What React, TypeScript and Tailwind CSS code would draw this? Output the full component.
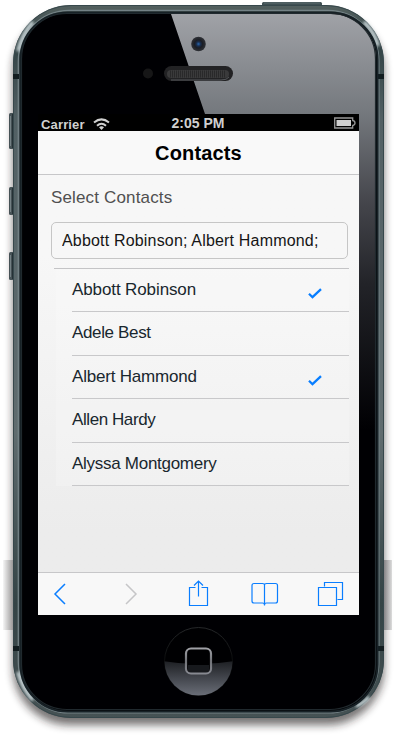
const contacts = [
  { name: "Abbott Robinson", selected: true, tracking: "tracking-[-0.11px]" },
  { name: "Adele Best", selected: false, tracking: "tracking-[-0.35px]" },
  { name: "Albert Hammond", selected: true, tracking: "tracking-[-0.2px]" },
  { name: "Allen Hardy", selected: false, tracking: "tracking-[-0.42px]" },
  { name: "Alyssa Montgomery", selected: false, tracking: "tracking-[-0.28px]" },
];

function Phone() {
  return (
    <svg className="absolute inset-0" width="401" height="748" viewBox="0 0 401 748" fill="none" aria-hidden="true">
      <defs>
        <linearGradient id="metal" x1="0" y1="5" x2="0" y2="718" gradientUnits="userSpaceOnUse">
          <stop stopColor="#53605f" />
          <stop offset=".06" stopColor="#344446" />
          <stop offset=".16" stopColor="#526064" />
          <stop offset=".6" stopColor="#606c6f" />
          <stop offset=".84" stopColor="#344345" />
          <stop offset="1" stopColor="#465254" />
        </linearGradient>
        <linearGradient id="glass" x1="0" y1="14" x2="0" y2="430" gradientUnits="userSpaceOnUse">
          <stop stopColor="#a0a2a7" />
          <stop offset=".24" stopColor="#74787d" />
          <stop offset=".45" stopColor="#45464c" />
          <stop offset=".65" stopColor="#222328" />
          <stop offset="1" stopColor="#000003" />
        </linearGradient>
        <linearGradient id="home" x1="0" y1="660" x2="0" y2="696" gradientUnits="userSpaceOnUse">
          <stop stopColor="#1b1d21" />
          <stop offset="1" stopColor="#6b6f79" />
        </linearGradient>
        <linearGradient id="square" x1="0" y1="647" x2="0" y2="675" gradientUnits="userSpaceOnUse">
          <stop stopColor="#a5a6ab" />
          <stop offset=".5" stopColor="#727479" />
          <stop offset="1" stopColor="#8a8c94" />
        </linearGradient>
        <linearGradient id="ring" x1="0" y1="627" x2="0" y2="665" gradientUnits="userSpaceOnUse">
          <stop stopColor="#26282a" />
          <stop offset="1" stopColor="#08090a" />
        </linearGradient>
        <linearGradient id="leftShade" x1="3" y1="0" x2="13" y2="0" gradientUnits="userSpaceOnUse">
          <stop stopColor="#f6f6f6" />
          <stop offset="1" stopColor="#9a9898" />
        </linearGradient>
        <linearGradient id="rightShade" x1="384" y1="0" x2="392" y2="0" gradientUnits="userSpaceOnUse">
          <stop stopColor="#858385" />
          <stop offset="1" stopColor="#dddddd" />
        </linearGradient>
        <radialGradient id="lens">
          <stop stopColor="#2866ad" />
          <stop offset=".3" stopColor="#192c4b" />
          <stop offset=".55" stopColor="#1b1e25" />
          <stop offset="1" stopColor="#303237" />
        </radialGradient>
        <clipPath id="face"><rect x="22" y="14" width="354" height="696" rx="45" /></clipPath>
        <clipPath id="homeClip"><circle cx="198.5" cy="661.5" r="34" /></clipPath>
        <filter id="shadow" x="-15%" y="-10%" width="130%" height="120%"><feGaussianBlur stdDeviation="4.2" /></filter>
        <filter id="shine" x="-80%" y="-80%" width="260%" height="260%"><feGaussianBlur stdDeviation="1.5" /></filter>
      </defs>
      <rect x="13" y="14" width="371" height="711" rx="57" fill="#201b1c" opacity=".62" filter="url(#shadow)" />
      <path d="M3 560h10v70H3Z" fill="url(#leftShade)" />
      <path d="M384 560h8v70h-8Z" fill="url(#rightShade)" />
      <rect x="262" y="2" width="60" height="8" rx="1.5" fill="#405053" />
      <path d="M264 3h56" stroke="#5d6c70" />
      {[[113, 36], [187, 28], [252, 28]].map(([y, h]) => (
        <g key={y}>
          <rect x="9" y={y} width="7" height={h} rx="1.5" fill="#465256" />
          <path d={`M10.5 ${y + 3}v${h - 6}`} stroke="#748084" />
          <path d={`M12.5 ${y + 1}v${h - 2}`} stroke="#253136" />
        </g>
      ))}
      <rect x="13" y="5" width="371" height="713" rx="58" fill="url(#metal)" />
      <rect x="13.5" y="5.5" width="370" height="712" rx="57.5" stroke="#37484c" />
      <rect x="18.3" y="10.3" width="360.6" height="702.6" rx="51" stroke="#748286" strokeWidth="1.3" />
      <g filter="url(#shine)" stroke="#d0dcdf" strokeWidth="3.5">
        <path d="M18 51Q22 34 33 22M364 22Q375 33 378 46M18 672Q22 688 33 700M356 706Q364 703 369 697" />
      </g>
      <path d="M13 76.5h6M378 76.5h6M13 648.5h6M378 648.5h6" stroke="#121d20" strokeWidth="5" />
      <rect x="20.5" y="12.5" width="357" height="699" rx="47" fill="#000003" stroke="#172126" strokeWidth="2" />
      <path d="M171 14H376V440H341V114H205Z" fill="url(#glass)" clipPath="url(#face)" />
      <rect x="21.5" y="13.5" width="354" height="696" rx="45.5" stroke="#20292e" strokeWidth="1.2" />
      <circle cx="148" cy="73.5" r="5" fill="#161617" />
      <circle cx="198.5" cy="44" r="7.3" fill="url(#lens)" />
      <rect x="164" y="66" width="69" height="15" rx="7.5" fill="#222224" />
      <path d="M171 74h54" stroke="#3a3a3b" strokeWidth="8" strokeLinecap="round" />
      <path d="M170 74h56" stroke="#29292a" strokeWidth="7" strokeDasharray="1 1" />
      <path d="M171 80h50q6 0 8-3" stroke="#55575a" />
      <circle cx="198.5" cy="661.5" r="34" fill="#000002" stroke="url(#ring)" />
      <path d="M163 661Q198 667 234 661V697H163Z" fill="url(#home)" clipPath="url(#homeClip)" />
      <rect x="186" y="648.5" width="25" height="25" rx="5" fill="#000002" />
      <path d="M188 665h21v5q0 3-3 3h-15q-3 0-3-3Z" fill="#17191d" />
      <rect x="186" y="648.5" width="25" height="25" rx="5" stroke="url(#square)" strokeWidth="2.2" />
    </svg>
  );
}

function StatusBar() {
  return (
    <div className="grid h-[17px] grid-cols-[105px_1fr_105px] items-start bg-black text-[13px] leading-[17px] font-bold text-[#d0d0d0]">
      <div className="flex items-start gap-2 pt-[2px] pl-[3px]">
        <span className="h-[15px] tracking-[0.15px]">Carrier</span>
        <svg className="mt-[2px]" width="17" height="12" viewBox="0 0 17 12" fill="none" stroke="currentColor" strokeWidth="2">
          <path d="M1 4.5Q8.5-1.7 16 4.5M4 7.7q4.5-3.8 9 0" />
          <path d="m6 9.2q2.5-2 5 0L8.5 12Z" fill="currentColor" stroke="none" />
        </svg>
      </div>
      <span className="h-[17px] pt-px pr-px text-center text-[14px]">2:05 PM</span>
      <svg className="mt-[3px] mr-[3px] justify-self-end" width="22" height="12" viewBox="0 0 22 12" fill="none">
        <path d="M.7 1h18v2.5q2.3.4 2.3 2.5t-2.3 2.5V11H.7Z" stroke="#969696" strokeWidth="1.3" />
        <path d="M2.5 3h14.5v6H2.5Z" fill="#cecece" />
      </svg>
    </div>
  );
}

function Toolbar() {
  return (
    <nav className="h-[43px] border-t border-[#c7c7c9] bg-[#f8f8f8]">
      <svg width="321" height="42" viewBox="0 0 321 42" fill="none" stroke="#0a7eff" strokeWidth="1.2">
        <path d="m27 11-10 10 10 10" strokeWidth="1.5" />
        <path d="m88 11 10 10-10 10" stroke="#c6c6c8" strokeWidth="1.5" />
        <path d="M157.5 14.5h-6v18h18v-18h-6M160.5 23.5v-15M156 12.5l4.5-4.5 4.5 4.5" />
        <path d="M226.5 11.5q0-1-2-1h-8.5q-2 0-2 2v15.500q0 2 2 2h8.500q2 0 2 2 0-2 2-2h9q2 0 2-2V12.500q0-2-2-2h-9q-2 0-2 1Zm0 0v21" />
        <path d="M286.5 13.5v-4h18v17h-5M280.5 14.5h18v18h-18Z" />
      </svg>
    </nav>
  );
}

export default function App() {
  return (
    <main className="relative flex h-[748px] w-[401px] items-start overflow-hidden bg-white pt-[114px] pl-[38px] font-['Liberation_Sans',Arial,sans-serif]">
      <Phone />
      <section className="relative flex h-[501px] w-[321px] flex-col bg-black">
        <StatusBar />
        <header className="h-11 shrink-0 border-b border-[#c7c7c9] bg-[#f9f9f9] pt-[11px] text-center text-[20px] leading-[23px] font-bold tracking-[0.15px] text-black">
          Contacts
        </header>
        <div className="min-h-0 flex-1 bg-linear-to-b from-[#f7f7f7] from-20% to-[#ececec] to-90% px-[13px] pt-3">
          <label className="block h-[35px] text-[17px] leading-[22px] tracking-[0.15px] text-[#505050]">Select Contacts</label>
          <input
            aria-label="Selected contacts"
            readOnly
            value="Abbott Robinson; Albert Hammond;"
            className="block h-[37px] w-[297px] rounded-[5px] border border-[#c6c6c6] px-2.5 text-[16px] tracking-[0.18px] text-[#151515] outline-none"
          />
          <ul className="mt-[9px] ml-[3px] w-[295px] border-t border-[#c4c4c6]">
            {contacts.map((contact) => (
              <li key={contact.name} className="ml-0.5 bg-white/20 pl-4">
                <div className="flex h-[43.4px] items-center justify-between border-b border-[#c8c8ca] pr-[27px] text-[17px] text-[#19272e]">
                  <span className={`-mt-px ${contact.tracking}`}>{contact.name}</span>
                  {contact.selected && (
                    <svg className="mt-[7px]" width="14" height="11" viewBox="0 0 14 11" fill="none">
                      <path d="m1 5.8 3.5 3.4L13 1.2" stroke="#087eff" strokeWidth="2.3" />
                    </svg>
                  )}
                </div>
              </li>
            ))}
          </ul>
        </div>
        <Toolbar />
      </section>
    </main>
  );
}
